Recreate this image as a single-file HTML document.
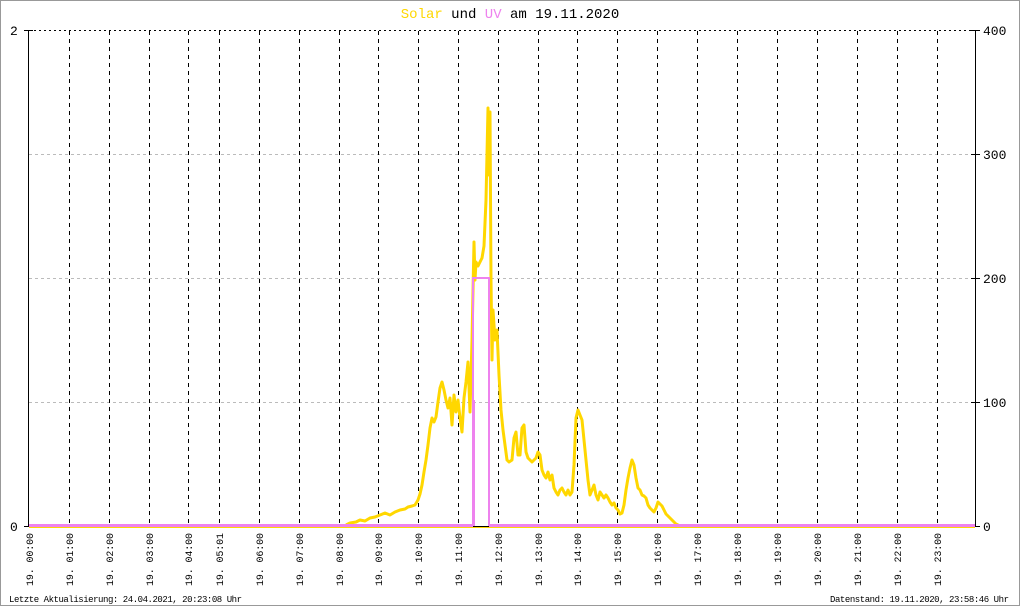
<!DOCTYPE html>
<html><head><meta charset="utf-8"><style>
html,body{margin:0;padding:0;background:#fff}
svg{display:block}
text{font-family:"Liberation Mono","DejaVu Sans Mono",monospace}
</style></head><body>
<svg width="1020" height="606" xmlns="http://www.w3.org/2000/svg">
<rect x="0.5" y="0.5" width="1019" height="605" fill="#fff" stroke="#999"/>
<text x="510" y="18" font-size="14" text-anchor="middle" fill="#000"><tspan fill="#ffd700">Solar</tspan> und <tspan fill="#ee82ee">UV</tspan> am 19.11.2020</text>
<g stroke="#bbb" stroke-dasharray="3,3" stroke-width="1">
<line x1="29" y1="154.5" x2="975" y2="154.5"/><line x1="29" y1="278.5" x2="975" y2="278.5"/><line x1="29" y1="402.5" x2="975" y2="402.5"/>
</g>
<line x1="29" y1="30.5" x2="975" y2="30.5" stroke="#000" stroke-dasharray="2,3"/>
<g stroke="#000" stroke-dasharray="4,4" stroke-width="1">
<line x1="69.5" y1="31" x2="69.5" y2="526"/><line x1="109.5" y1="31" x2="109.5" y2="526"/><line x1="149.5" y1="31" x2="149.5" y2="526"/><line x1="188.5" y1="31" x2="188.5" y2="526"/><line x1="219.5" y1="31" x2="219.5" y2="526"/><line x1="259.5" y1="31" x2="259.5" y2="526"/><line x1="299.5" y1="31" x2="299.5" y2="526"/><line x1="339.5" y1="31" x2="339.5" y2="526"/><line x1="378.5" y1="31" x2="378.5" y2="526"/><line x1="418.5" y1="31" x2="418.5" y2="526"/><line x1="458.5" y1="31" x2="458.5" y2="526"/><line x1="498.5" y1="31" x2="498.5" y2="526"/><line x1="538.5" y1="31" x2="538.5" y2="526"/><line x1="577.5" y1="31" x2="577.5" y2="526"/><line x1="617.5" y1="31" x2="617.5" y2="526"/><line x1="657.5" y1="31" x2="657.5" y2="526"/><line x1="697.5" y1="31" x2="697.5" y2="526"/><line x1="737.5" y1="31" x2="737.5" y2="526"/><line x1="777.5" y1="31" x2="777.5" y2="526"/><line x1="817.5" y1="31" x2="817.5" y2="526"/><line x1="857.5" y1="31" x2="857.5" y2="526"/><line x1="897.5" y1="31" x2="897.5" y2="526"/><line x1="937.5" y1="31" x2="937.5" y2="526"/>
</g>
<g stroke="#000" stroke-width="1">
<line x1="28.5" y1="30" x2="28.5" y2="526"/><line x1="24" y1="30.5" x2="33" y2="30.5"/><line x1="24" y1="526.5" x2="29" y2="526.5"/>
<line x1="975.5" y1="30" x2="975.5" y2="526"/><line x1="971" y1="30.5" x2="980" y2="30.5"/><line x1="971" y1="154.5" x2="980" y2="154.5"/><line x1="971" y1="278.5" x2="980" y2="278.5"/><line x1="971" y1="402.5" x2="980" y2="402.5"/><line x1="975" y1="526.5" x2="980" y2="526.5"/>
<line x1="29" y1="526.5" x2="975" y2="526.5"/>
</g>
<g font-size="13" fill="#000">
<text x="10" y="35">2</text><text x="10" y="531">0</text>
<text x="983" y="35">400</text><text x="983" y="159">300</text><text x="983" y="283">200</text><text x="983" y="407">100</text><text x="983" y="531">0</text>
</g>
<line x1="29" y1="527.5" x2="975" y2="527.5" stroke="#ffd700" stroke-width="1"/>
<polyline fill="none" stroke="#ffd700" stroke-width="3" stroke-linejoin="round" points="346,525 350,523 356,522 360,520 365,521 370,518 375,517 380,515 385,513 390,515 395,512 400,510 405,509 408,507 412,506 415,505 418,500 420,494 422,485 424,472 426,460 428,445 430,428 432,418 434,422 436,417 438,402 440,388 442,382 444,390 446,400 448,408 450,398 452,425 454,395 456,412 458,400 460,418 462,432 464,398 466,382 468,362 470,412 472,340 474,242 475,280 476,262 478,266 480,262 482,258 484,246 486,200 488,108 489,175 490,112 491,280 492,360 493,310 495,340 497,330 499,375 501,410 503,430 505,445 507,460 509,462 512,460 514,438 516,432 518,455 520,455 522,428 524,425 526,452 528,458 530,460 532,462 534,460 536,458 538,452 540,455 542,470 544,475 546,478 548,472 550,480 552,475 554,488 556,492 558,495 560,490 562,488 564,492 566,495 568,490 570,495 572,492 574,465 576,418 578,410 580,415 582,420 584,440 586,460 588,480 590,495 592,490 594,485 596,495 598,500 600,492 602,495 604,498 606,495 608,498 610,502 612,505 614,503 616,508 618,510 620,514 622,513 624,505 626,490 628,478 630,468 632,460 634,465 636,478 638,488 640,490 642,495 644,496 646,498 648,505 650,508 652,510 654,512 656,508 658,502 660,504 662,506 664,510 666,514 668,516 670,518 672,520 674,522 676,524 680,526"/>
<polyline fill="none" stroke="#ee82ee" stroke-width="3" points="29,525.5 473,525.5"/>
<polyline fill="none" stroke="#ee82ee" stroke-width="2" points="473,526 473,278 489,278 489,526"/>
<polyline fill="none" stroke="#ee82ee" stroke-width="3" points="489,525.5 975,525.5"/>
<line x1="473.5" y1="400" x2="473.5" y2="526" stroke="#ee82ee" stroke-width="3"/>
<g font-size="10" fill="#000">
<text transform="translate(33,586) rotate(-90)" textLength="53">19. 00:00</text>
<text transform="translate(73,586) rotate(-90)" textLength="53">19. 01:00</text>
<text transform="translate(113,586) rotate(-90)" textLength="53">19. 02:00</text>
<text transform="translate(153,586) rotate(-90)" textLength="53">19. 03:00</text>
<text transform="translate(192,586) rotate(-90)" textLength="53">19. 04:00</text>
<text transform="translate(223,586) rotate(-90)" textLength="53">19. 05:01</text>
<text transform="translate(263,586) rotate(-90)" textLength="53">19. 06:00</text>
<text transform="translate(303,586) rotate(-90)" textLength="53">19. 07:00</text>
<text transform="translate(343,586) rotate(-90)" textLength="53">19. 08:00</text>
<text transform="translate(382,586) rotate(-90)" textLength="53">19. 09:00</text>
<text transform="translate(422,586) rotate(-90)" textLength="53">19. 10:00</text>
<text transform="translate(462,586) rotate(-90)" textLength="53">19. 11:00</text>
<text transform="translate(502,586) rotate(-90)" textLength="53">19. 12:00</text>
<text transform="translate(542,586) rotate(-90)" textLength="53">19. 13:00</text>
<text transform="translate(581,586) rotate(-90)" textLength="53">19. 14:00</text>
<text transform="translate(621,586) rotate(-90)" textLength="53">19. 15:00</text>
<text transform="translate(661,586) rotate(-90)" textLength="53">19. 16:00</text>
<text transform="translate(701,586) rotate(-90)" textLength="53">19. 17:00</text>
<text transform="translate(741,586) rotate(-90)" textLength="53">19. 18:00</text>
<text transform="translate(781,586) rotate(-90)" textLength="53">19. 19:00</text>
<text transform="translate(821,586) rotate(-90)" textLength="53">19. 20:00</text>
<text transform="translate(861,586) rotate(-90)" textLength="53">19. 21:00</text>
<text transform="translate(901,586) rotate(-90)" textLength="53">19. 22:00</text>
<text transform="translate(941,586) rotate(-90)" textLength="53">19. 23:00</text>
</g>
<g font-size="9" fill="#000">
<text x="9" y="602" textLength="233">Letzte Aktualisierung: 24.04.2021, 20:23:08 Uhr</text>
<text x="830" y="602" textLength="179">Datenstand: 19.11.2020, 23:58:46 Uhr</text>
</g>
</svg>
</body></html>
